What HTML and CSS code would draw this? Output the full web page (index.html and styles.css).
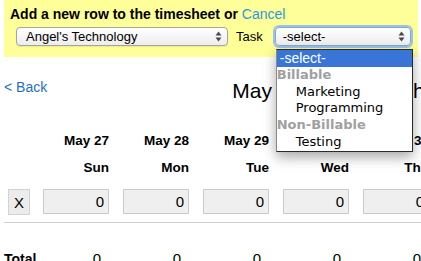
FILE: index.html
```html
<!DOCTYPE html>
<html lang="en">
<head>
    <meta charset="UTF-8">
    <title>Timesheet</title>
    <link rel="stylesheet" href="styles.css">
</head>
<body>
    <div class="page">
        <!-- add row panel -->
        <div class="add-row">
            <h3>Add a new row to the timesheet or <a href="#" class="cancel">Cancel</a></h3>
            <div class="add-fields">
                <div class="select project">
                    <span>Angel's Technology</span>
                    <svg class="arrows" width="7" height="11" viewBox="0 0 7 11"><path d="M3.5 0.5 L6.5 4.5 L0.5 4.5 Z M3.5 10.5 L6.5 6.5 L0.5 6.5 Z" fill="#4a4a4a"/></svg>
                </div>
                <label class="task-label">Task</label>
                <div class="task-wrap">
                    <div class="select task focused">
                        <span>-select-</span>
                        <svg class="arrows" width="7" height="11" viewBox="0 0 7 11"><path d="M3.5 0.5 L6.5 4.5 L0.5 4.5 Z M3.5 10.5 L6.5 6.5 L0.5 6.5 Z" fill="#4a4a4a"/></svg>
                    </div>
                    <ul class="options">
                        <li class="selected">-select-</li>
                        <li class="group">Billable</li>
                        <li class="option">Marketing</li>
                        <li class="option">Programming</li>
                        <li class="group">Non-Billable</li>
                        <li class="option">Testing</li>
                    </ul>
                </div>
            </div>
        </div>

        <div class="title-row">
            <a href="#" class="back">&lt; Back</a>
            <h2>May 2013 &mdash; Timesheet</h2>
        </div>

        <!-- the week -->
        <div class="sheet">
            <div class="row head">
                <div></div>
                <div>May 27</div>
                <div>May 28</div>
                <div>May 29</div>
                <div>May 30</div>
                <div>May 31</div>
                <div>Jun 1</div>
                <div>Jun 2</div>
            </div>
            <div class="row head">
                <div></div>
                <div>Sun</div>
                <div>Mon</div>
                <div>Tue</div>
                <div>Wed</div>
                <div>Thu</div>
                <div>Fri</div>
                <div>Sat</div>
            </div>
            <div class="row entries">
                <div><button class="remove">X</button></div>
                <div><input class="hours" value="0"></div>
                <div><input class="hours" value="0"></div>
                <div><input class="hours" value="0"></div>
                <div><input class="hours" value="0"></div>
                <div><input class="hours" value="0"></div>
                <div><input class="hours" value="0"></div>
                <div><input class="hours" value="0"></div>
            </div>
            <div class="row totals">
                <div class="total-label">Total</div>
                <div>0</div>
                <div>0</div>
                <div>0</div>
                <div>0</div>
                <div>0</div>
                <div>0</div>
                <div>0</div>
            </div>
        </div>
    </div>
</body>
</html>
```
FILE: styles.css
```css
* {
    margin: 0;
    padding: 0;
    box-sizing: border-box;
}

html {
    overflow: hidden;
}

body {
    background: #fff;
    font-family: "Liberation Sans", Arial, sans-serif;
    color: #000;
}

.page {
    width: 700px;
}

a {
    text-decoration: none;
}

/* add row panel */
.add-row {
    margin-left: 4px;
    width: 414px;
    height: 57px;
    background: #ffff99;
    padding: 6px 6px;
}

.add-row h3 {
    font-size: 14px;
    line-height: 16px;
    font-weight: bold;
}

.cancel {
    color: #2c9ad8;
    font-weight: normal;
}

.add-fields {
    display: flex;
    align-items: center;
    margin-top: 5px;
}

.select {
    position: relative;
    height: 19px;
    border: 1px solid #a4a4a4;
    border-radius: 4px;
    background: linear-gradient(#ffffff, #ededed);
    box-shadow: 0 1px 1px rgba(0, 0, 0, 0.08);
    font-size: 13px;
    line-height: 17px;
    padding-left: 9px;
}

.select .arrows {
    position: absolute;
    right: 5px;
    top: 3px;
}

.project {
    margin-left: 6px;
    width: 212px;
}

.task-label {
    margin-left: 8px;
    font-size: 13px;
}

.task-wrap {
    position: relative;
    margin-left: 12px;
}

.task {
    width: 136px;
    padding-left: 7px;
}

.focused {
    border-color: #7fa9d4;
    box-shadow: 0 0 0 2px #9cc2ea;
}

/* open dropdown */
.options {
    position: absolute;
    top: 22px;
    left: 1px;
    width: 137px;
    list-style: none;
    background: #fff;
    border: 1px solid #2a2a2a;
    border-left-color: #8a8a8a;
    box-shadow: 0 5px 12px rgba(0, 0, 0, 0.35);
    font-family: "DejaVu Sans", sans-serif;
    font-size: 13px;
    line-height: 16.8px;
    z-index: 5;
}

.options li {
    white-space: nowrap;
}

.options .selected {
    background: #3875d7;
    color: #fff;
    font-family: "Liberation Sans", Arial, sans-serif;
    font-size: 14px;
    padding-left: 3px;
}

.options .group {
    color: #a0a0a0;
    font-weight: bold;
    padding-left: 0;
}

.options .option {
    padding-left: 19px;
}

/* title */
.title-row {
    display: flex;
    align-items: flex-start;
    margin-top: 22px;
    padding-left: 4px;
}

.back {
    color: #1f6fc1;
    font-size: 14px;
    line-height: 16px;
}

.title-row h2 {
    margin-left: 185px;
    font-size: 21px;
    line-height: 24px;
    font-weight: normal;
    white-space: nowrap;
}

/* week grid */
.sheet {
    margin-top: 24px;
    padding-left: 4px;
}

.row {
    display: grid;
    grid-template-columns: 39px repeat(7, 80px);
}

.head div {
    font-size: 13.5px;
    font-weight: bold;
    line-height: 27px;
    text-align: right;
    padding-right: 14px;
}

.entries {
    margin-top: 8px;
    padding-bottom: 7px;
    border-bottom: 1px solid #cfcfcf;
}

.remove {
    margin-left: 4px;
    width: 22px;
    height: 26px;
    background: #ececec;
    border: 1px solid #d2d2d2;
    font-family: "Liberation Sans", Arial, sans-serif;
    font-size: 15px;
    color: #000;
}

.hours {
    display: block;
    width: 66px;
    height: 25px;
    background: #efefef;
    border: 1px solid #cbcbcb;
    font-family: "Liberation Sans", Arial, sans-serif;
    font-size: 15px;
    text-align: right;
    padding-right: 4px;
    color: #000;
}

.totals {
    margin-top: 28px;
    font-size: 15px;
    line-height: 16px;
}

.totals div {
    text-align: right;
    padding-right: 22px;
}

.totals .total-label {
    text-align: left;
    font-size: 14px;
    font-weight: bold;
    padding-right: 0;
}
```
